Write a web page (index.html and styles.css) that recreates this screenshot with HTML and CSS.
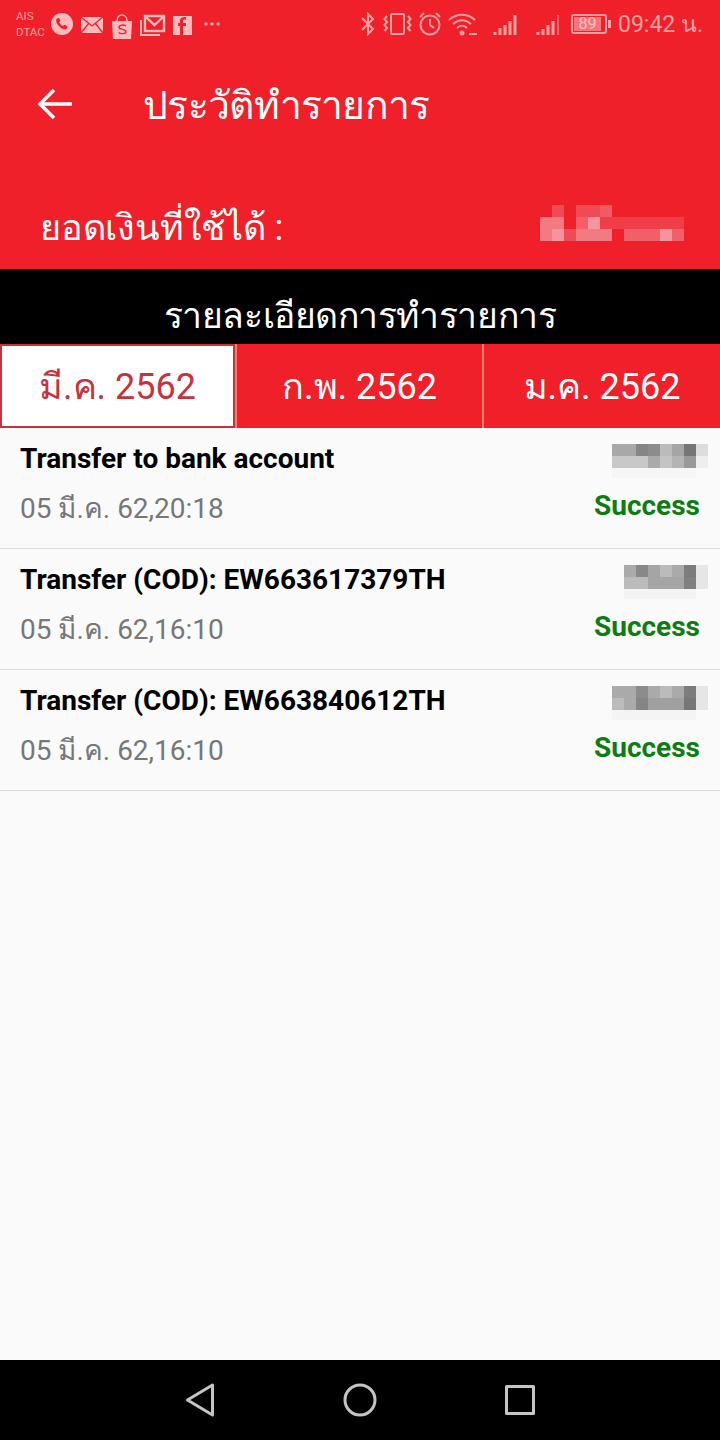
FILE: index.html
```html
<!DOCTYPE html>
<html lang="en">
<head>
    <meta charset="UTF-8">
    <meta name="viewport" content="width=device-width, initial-scale=1.0">
    <title>ประวัติทำรายการ</title>
    <link rel="stylesheet" href="styles.css">
</head>
<body>
<div class="screen">

    <div class="header">
        <div class="status-bar">
            <div class="carriers">AIS<br>DTAC</div>
            <svg width="180" height="30" viewBox="0 0 180 30">
                <circle cx="14" cy="15" r="11" fill="#fbb"/>
                <path d="M8.500 10c1-1.500 2.500-1.500 3.200 0l.7 2-1.200 1.300c.8 1.800 2.100 3.100 3.800 3.800l1.400-1.300 2 .9c1.400.7 1.300 2.100 0 3.200-4 2.100-12-5.800-9.900-9.900z" fill="#ef2029"/>
                <rect x="33" y="8" width="22" height="16" fill="#fbb"/>
                <path d="M33 8l11 9 11-9M33 24l8-10M55 24l-8-10" fill="none" stroke="#ef2029" stroke-width="1.300"/>
                <path d="M64 12h20l-1 19h-18z" fill="#fbb"/>
                <path d="M69 12c0-8 10-8 10 0" fill="none" stroke="#fbb" stroke-width="1.500"/>
                <path d="M78 17c-2-1.500-7-1.200-7 1.200 0 2.800 7 1.500 7 4.300 0 2.500-5 2.700-7.500 1" fill="none" stroke="#ef2029" stroke-width="1.400"/>
                <rect x="97" y="7" width="19" height="15" fill="none" stroke="#fbb" stroke-width="2.400"/>
                <path d="M98 8l8.500 8 8.500-8" fill="none" stroke="#fbb" stroke-width="2.400"/>
                <path d="M93 11v15h19" fill="none" stroke="#fbb" stroke-width="2"/>
                <rect x="125" y="7" width="19" height="19" fill="#fbb"/>
                <path d="M135 26v-9h3v-3h-3v-2c0-1 .5-1.500 3-1.500v-2.500c-4 0-6 1-6 4v2h-2v3h2v9z" fill="#ef2029"/>
                <circle cx="158" cy="15" r="1.800" fill="#f9a0a0"/>
                <circle cx="164" cy="15" r="1.800" fill="#f9a0a0"/>
                <circle cx="170" cy="15" r="1.800" fill="#f9a0a0"/>
            </svg>
            <div class="status-right">
                <svg width="208" height="30" viewBox="0 0 208 30" fill="none" stroke="#f9a0a0" stroke-width="2">
                    <path d="M3 9l11 11-5 5V5l5 5L3 21"/>
                    <rect x="32" y="5" width="13" height="20" rx="1"/>
                    <path d="M28 7l-2.500 3 2.500 3-2.500 3 2.500 3-2.500 3M49 7l2.500 3-2.500 3 2.500 3-2.500 3 2.500 3"/>
                    <circle cx="71" cy="16" r="9.500"/>
                    <path d="M71 10v6l4 3M61 8l4-4M81 8l-4-4"/>
                    <path d="M90 11c8-7 18-7 26 0M94 15c6-5 12-5 18 0M98 19c3-3 7-3 10 0"/>
                    <circle cx="103" cy="24" r="1.500" fill="#f9a0a0"/>
                    <path d="M110 25h8"/>
                    <path d="M136 26v-3M141 26v-7M146 26v-10M151 26v-14M156 26V6" stroke-width="3"/>
                    <path d="M179 26v-3M184 26v-6M189 26v-10M194 26v-14" stroke-width="3"/>
                    <path d="M199 26V6" stroke-width="1.500" stroke="#f77"/>
                </svg>
                <div class="battery"><span class="battery-fill">89</span></div>
                <span class="battery-nub"></span>
                <span class="clock">09:42 น.</span>
            </div>
        </div>

        <div class="toolbar">
            <svg class="back" width="36" height="32" viewBox="0 0 36 32" fill="none" stroke="#fff" stroke-width="3.500">
                <path d="M35 16H4M17 2L3 16l14 14"/>
            </svg>
            <h1 class="title">ประวัติทำรายการ</h1>
        </div>

        <div class="balance">
            <span class="balance-label">ยอดเงินที่ใช้ได้ :</span>
            <svg class="mosaic" width="144" height="36" viewBox="0 0 12 3">
                <rect x="1" width="1" height="1" fill="#f04a54"/>
                <rect x="3" width="2" height="1" fill="#f04a54"/>
                <rect x="5" width="1" height="1" fill="#f05a64"/>
                <rect y="1" width="2" height="1" fill="#f27a82"/>
                <rect x="3" y="1" width="1" height="1" fill="#f16068"/>
                <rect x="4" y="1" width="1" height="1" fill="#f5949c"/>
                <rect x="5" y="1" width="7" height="1" fill="#f03e48"/>
                <rect y="2" width="1" height="1" fill="#f27a82"/>
                <rect x="1" y="2" width="1" height="1" fill="#f5949c"/>
                <rect x="2" y="2" width="1" height="1" fill="#f04a54"/>
                <rect x="3" y="2" width="3" height="1" fill="#f27a82"/>
                <rect x="7" y="2" width="3" height="1" fill="#f16068"/>
                <rect x="10" y="2" width="1" height="1" fill="#f5949c"/>
                <rect x="11" y="2" width="1" height="1" fill="#f16068"/>
            </svg>
        </div>
    </div>

    <div class="section-title">รายละเอียดการทำรายการ</div>

    <div class="tabs">
        <div class="tab tab-active">มี.ค. 2562</div>
        <div class="tab tab-mid">ก.พ. 2562</div>
        <div class="tab tab-last">ม.ค. 2562</div>
    </div>

    <div class="list">
        <div class="row">
            <div>
                <div class="row-title">Transfer to bank account</div>
                <div class="row-date">05 มี.ค. 62,20:18</div>
            </div>
            <div class="row-side">
                <svg class="mosaic" width="96" height="34" viewBox="0 0 96 34">
                    <rect width="24" height="12" fill="#a8a8a8"/>
                    <rect x="24" width="12" height="12" fill="#858585"/>
                    <rect x="36" width="12" height="12" fill="#8c8c8c"/>
                    <rect x="48" width="12" height="12" fill="#bbb"/>
                    <rect x="60" width="12" height="12" fill="#a5a5a5"/>
                    <rect x="72" width="12" height="12" fill="#757575"/>
                    <rect x="84" width="12" height="12" fill="#ddd"/>
                    <rect y="12" width="36" height="12" fill="#c8c8c8"/>
                    <rect x="36" y="12" width="12" height="12" fill="#aaa"/>
                    <rect x="48" y="12" width="12" height="12" fill="#c4c4c4"/>
                    <rect x="60" y="12" width="12" height="12" fill="#b4b4b4"/>
                    <rect x="72" y="12" width="12" height="12" fill="#999"/>
                    <rect x="84" y="12" width="12" height="12" fill="#eee"/>
                    <rect y="24" width="84" height="10" fill="#f6f6f6"/>
                </svg>
                <span class="row-status">Success</span>
            </div>
        </div>
        <div class="row">
            <div>
                <div class="row-title">Transfer (COD): EW663617379TH</div>
                <div class="row-date">05 มี.ค. 62,16:10</div>
            </div>
            <div class="row-side">
                <svg class="mosaic" width="84" height="34" viewBox="0 0 84 34">
                    <rect width="12" height="12" fill="#aaa"/>
                    <rect x="12" width="12" height="12" fill="#888"/>
                    <rect x="24" width="12" height="12" fill="#a5a5a5"/>
                    <rect x="36" width="12" height="12" fill="#bbb"/>
                    <rect x="48" width="12" height="12" fill="#aaa"/>
                    <rect x="60" width="12" height="12" fill="#7c7c7c"/>
                    <rect x="72" width="12" height="12" fill="#e6e6e6"/>
                    <rect y="12" width="24" height="12" fill="#bbb"/>
                    <rect x="24" y="12" width="36" height="12" fill="#a5a5a5"/>
                    <rect x="60" y="12" width="12" height="12" fill="#808080"/>
                    <rect x="72" y="12" width="12" height="12" fill="#e6e6e6"/>
                    <rect y="24" width="72" height="10" fill="#f4f4f4"/>
                </svg>
                <span class="row-status">Success</span>
            </div>
        </div>
        <div class="row">
            <div>
                <div class="row-title">Transfer (COD): EW663840612TH</div>
                <div class="row-date">05 มี.ค. 62,16:10</div>
            </div>
            <div class="row-side">
                <svg class="mosaic" width="96" height="34" viewBox="0 0 96 34">
                    <rect width="24" height="12" fill="#aaa"/>
                    <rect x="24" width="12" height="12" fill="#8c8c8c"/>
                    <rect x="36" width="12" height="12" fill="#aaa"/>
                    <rect x="48" width="12" height="12" fill="#bbb"/>
                    <rect x="60" width="12" height="12" fill="#aaa"/>
                    <rect x="72" width="12" height="12" fill="#7c7c7c"/>
                    <rect x="84" width="12" height="12" fill="#e6e6e6"/>
                    <rect y="12" width="12" height="12" fill="#bbb"/>
                    <rect x="12" y="12" width="12" height="12" fill="#aaa"/>
                    <rect x="24" y="12" width="12" height="12" fill="#858585"/>
                    <rect x="36" y="12" width="36" height="12" fill="#a0a0a0"/>
                    <rect x="72" y="12" width="12" height="12" fill="#777"/>
                    <rect x="84" y="12" width="12" height="12" fill="#e6e6e6"/>
                    <rect y="24" width="84" height="10" fill="#f4f4f4"/>
                </svg>
                <span class="row-status">Success</span>
            </div>
        </div>
    </div>

    <div class="nav-bar">
        <svg width="34" height="36" viewBox="0 0 34 36" fill="none" stroke="#c4c4c4" stroke-width="3" stroke-linejoin="round">
            <path d="M29.500 3v30L4.500 18z"/>
        </svg>
        <svg width="34" height="34" viewBox="0 0 34 34" fill="none" stroke="#c4c4c4" stroke-width="3">
            <circle cx="17" cy="17" r="15"/>
        </svg>
        <svg width="32" height="32" viewBox="0 0 32 32" fill="none" stroke="#c4c4c4" stroke-width="3" stroke-linejoin="round">
            <rect x="3.500" y="2.500" width="27" height="27"/>
        </svg>
    </div>

</div>
</body>
</html>
```

FILE: styles.css
```css
* {
    box-sizing: border-box;
}
body {
    margin: 0;
    font-family: Roboto, "Noto Sans", sans-serif;
}
.screen {
    width: 720px;
    height: 1440px;
    display: flex;
    flex-direction: column;
    background-color: #fafafa;
    overflow: hidden;
}
.header {
    height: 269px;
    background-color: #ef2029;
    color: #fff;
}
.status-bar {
    height: 48px;
    display: flex;
    align-items: center;
    padding-left: 16px;
    color: #f9a0a0;
}
.carriers {
    width: 32px;
    font-size: 11.500px;
    line-height: 16px;
}
.status-right {
    margin-left: auto;
    display: flex;
    align-items: center;
    padding-right: 17px;
}
.battery {
    width: 36px;
    height: 20px;
    margin-left: 4px;
    padding: 1px;
    border: 2px solid #f9a0a0;
    border-radius: 3px;
}
.battery-fill {
    display: block;
    width: 27px;
    height: 14px;
    background-color: #f9737b;
    color: #fbc4c4;
    font-size: 16px;
    line-height: 14px;
    text-align: center;
}
.battery-nub {
    width: 3px;
    height: 8px;
    margin-left: 1px;
    background-color: #f9a0a0;
}
.clock {
    margin-left: 7px;
    font-size: 23px;
}
.toolbar {
    height: 114px;
    display: flex;
    align-items: center;
    padding-left: 37px;
}
.title {
    margin: 0 0 0 70px;
    font-size: 39px;
    font-weight: 400;
    letter-spacing: -0.7px;
}
.back {
    margin-top: -2px;
}
.balance {
    height: 107px;
    display: flex;
    justify-content: space-between;
    align-items: flex-start;
    padding: 43px 36px 0 40px;
}
.balance-label {
    margin-top: 3px;
    font-size: 36px;
    line-height: 40px;
    letter-spacing: -0.2px;
}
.section-title {
    height: 75px;
    background-color: #000;
    color: #fff;
    font-size: 35.500px;
    line-height: 94px;
    letter-spacing: -0.45px;
    text-align: center;
    overflow: hidden;
}
.tabs {
    height: 84px;
    display: flex;
    background-color: #ef2029;
    color: #fff;
    font-size: 36px;
}
.tab {
    display: flex;
    align-items: center;
    justify-content: center;
}
.tab-active {
    width: 235px;
    background-color: #fff;
    border: 2px solid #c8323a;
    color: #c8323a;
}
.tab-mid {
    width: 249px;
    border-right: 2px solid #f4806a;
    border-left: 2px solid #f4806a;
}
.tab-last {
    flex: 1;
}
.list {
    flex: 1;
}
.row {
    height: 121px;
    display: flex;
    justify-content: space-between;
    padding: 9px 20px 0;
    border-bottom: 1px solid #ddd;
}
.row-title {
    font-size: 28px;
    font-weight: 700;
    line-height: 44px;
    color: #000;
}
.row-date {
    margin-top: 6px;
    font-size: 28px;
    line-height: 44px;
    color: #777;
}
.row-side {
    display: flex;
    flex-direction: column;
    align-items: flex-end;
}
.mosaic {
    display: block;
    flex: none;
}
.row-side .mosaic {
    margin-top: 7px;
    margin-right: -8px;
}
.row-status {
    margin-top: 8px;
    font-size: 28px;
    font-weight: 700;
    line-height: 40px;
    color: #0d7d12;
}
.nav-bar {
    height: 80px;
    display: flex;
    align-items: center;
    justify-content: space-between;
    padding: 0 185px 0 183px;
    background-color: #000;
}
```
